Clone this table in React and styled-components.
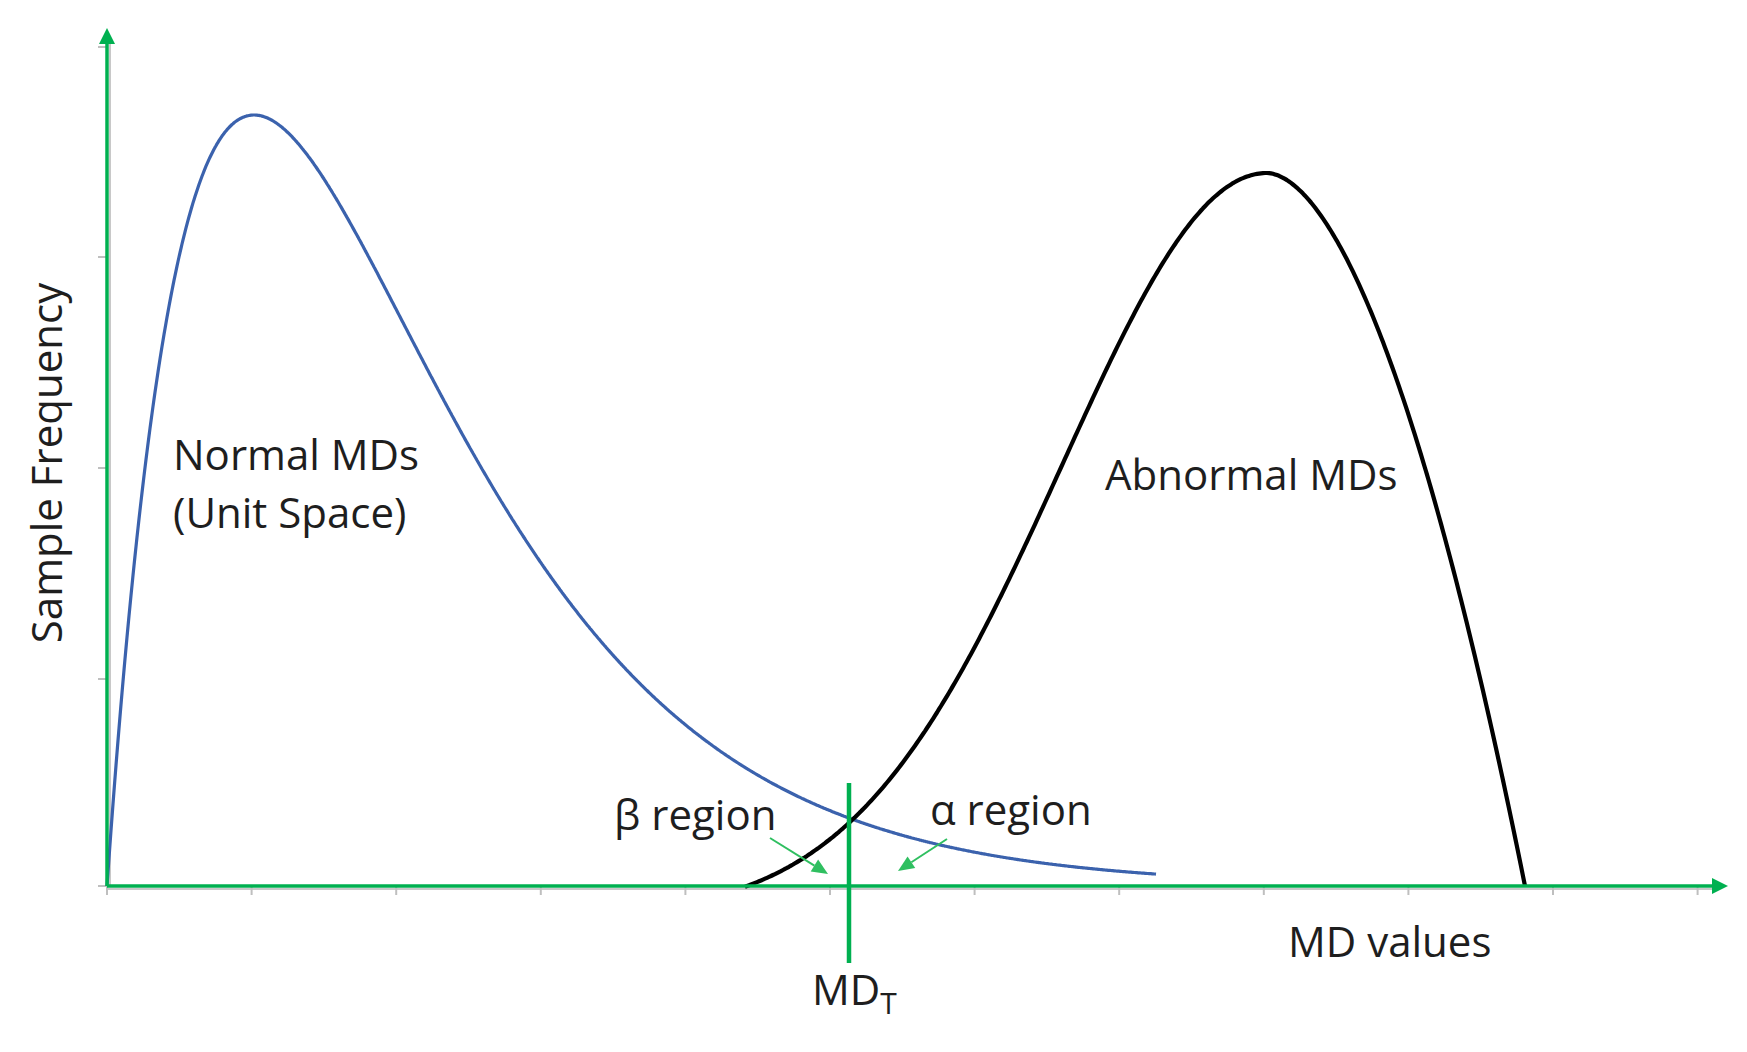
import React from "react";
import styled, { createGlobalStyle } from "styled-components";

const GlobalStyle = createGlobalStyle`
  html, body {
    margin: 0;
    padding: 0;
    background: #ffffff;
  }
  body {
    font-family: "Open Sans", "Liberation Sans", sans-serif;
  }
`;

const Figure = styled.div`
  width: 1747px;
  height: 1052px;
  background: #ffffff;
  overflow: hidden;
`;

const Chart = styled.svg`
  display: block;
  width: 1747px;
  height: 1052px;
`;

const AxisLine = styled.line`
  stroke: #00b050;
  stroke-width: 3.5;
`;

const AxisShadow = styled.line`
  stroke: #c8c8c8;
  stroke-width: 2;
`;

const Tick = styled.line`
  stroke: #bfbfbf;
  stroke-width: 2;
`;

const Head = styled.polygon`
  fill: ${(p) => p.$color || "#00b050"};
`;

const Threshold = styled.line`
  stroke: #00b050;
  stroke-width: 4.5;
`;

const Pointer = styled.line`
  stroke: #2fbf60;
  stroke-width: 2;
`;

const Curve = styled.path`
  fill: none;
  stroke: ${(p) => p.$color};
  stroke-width: ${(p) => p.$width};
  stroke-linejoin: round;
`;

const Label = styled.text`
  font-family: "Open Sans", "Liberation Sans", sans-serif;
  font-size: ${(p) => p.$size || 42}px;
  fill: #1e1e1e;
`;

const ORIGIN_X = 107;
const AXIS_Y = 886;
const X_STEP = 144.6;
const xTicks = Array.from({ length: 12 }, (_, i) => ORIGIN_X + i * X_STEP);
const yTicks = [47, 257, 468, 679, 886];

// sample a height function into an svg path (height measured up from the x axis)
const plot = (fn, from, to, step = 2) => {
  const pts = [];
  for (let x = from; x <= to; x += step) pts.push([x, AXIS_Y - fn(x)]);
  if (pts[pts.length - 1][0] !== to) pts.push([to, AXIS_Y - fn(to)]);
  return pts
    .map(([x, y], i) => `${i ? "L" : "M"}${x.toFixed(1)},${y.toFixed(1)}`)
    .join(" ");
};

// normal MDs: gamma-like, peak 771 high at x = 254
const normal = (x) => {
  const u = (x - ORIGIN_X) / 147;
  return 771 * u * Math.exp(1 - u);
};

// abnormal MDs: long gaussian left flank, steep right flank
const PEAK_X = 1267;
const PEAK_H = 713;
const abnormal = (x) => {
  if (x <= PEAK_X) {
    const s = 205;
    const d = PEAK_X - x;
    const c = Math.exp(-(520 * 520) / (2 * s * s));
    return (PEAK_H * (Math.exp(-(d * d) / (2 * s * s)) - c)) / (1 - c);
  }
  const d = (x - PEAK_X) / 258;
  return PEAK_H * (1 - Math.pow(d, 1.8));
};

// small pointer arrow: line plus filled head at the tip
function PointerArrow({ from, to }) {
  const [x1, y1] = from;
  const [x2, y2] = to;
  const ang = Math.atan2(y2 - y1, x2 - x1);
  const len = 16;
  const half = 7;
  const bx = x2 - len * Math.cos(ang);
  const by = y2 - len * Math.sin(ang);
  const nx = -Math.sin(ang) * half;
  const ny = Math.cos(ang) * half;
  return (
    <g>
      <Pointer x1={x1} y1={y1} x2={bx} y2={by} />
      <Head
        $color="#2fbf60"
        points={`${x2},${y2} ${bx + nx},${by + ny} ${bx - nx},${by - ny}`}
      />
    </g>
  );
}

export default function App() {
  return (
    <>
      <GlobalStyle />
      <Figure>
        <Chart viewBox="0 0 1747 1052">
          {/* faint grey axis lines under the green ones */}
          <AxisShadow x1={ORIGIN_X + 3} y1={44} x2={ORIGIN_X + 3} y2={AXIS_Y} />
          <AxisShadow x1={ORIGIN_X} y1={AXIS_Y + 3} x2={1712} y2={AXIS_Y + 3} />

          {xTicks.map((x, i) => (
            <Tick key={`x${i}`} x1={x} y1={AXIS_Y} x2={x} y2={AXIS_Y + 9} />
          ))}
          {yTicks.map((y, i) => (
            <Tick key={`y${i}`} x1={ORIGIN_X - 9} y1={y} x2={ORIGIN_X} y2={y} />
          ))}

          <Curve d={plot(normal, ORIGIN_X, 1156, 1)} $color="#3b62ad" $width={3.2} />
          <Curve d={plot(abnormal, 745, 1525, 2)} $color="#000000" $width={4.2} />

          <AxisLine x1={ORIGIN_X} y1={AXIS_Y} x2={ORIGIN_X} y2={42} />
          <Head points={`${ORIGIN_X},28 ${ORIGIN_X - 8},44 ${ORIGIN_X + 8},44`} />
          <AxisLine x1={ORIGIN_X} y1={AXIS_Y} x2={1713} y2={AXIS_Y} />
          <Head points={`1728,${AXIS_Y} 1712,${AXIS_Y - 8} 1712,${AXIS_Y + 8}`} />

          <Threshold x1={849} y1={783} x2={849} y2={963} />

          <PointerArrow from={[770, 838]} to={[828, 874]} />
          <PointerArrow from={[947, 839]} to={[898, 871]} />

          <Label x={0} y={0} textAnchor="middle" transform="translate(62,463) rotate(-90)">
            Sample Frequency
          </Label>
          <Label x={173} y={470}>Normal MDs</Label>
          <Label x={173} y={528}>(Unit Space)</Label>
          <Label x={1105} y={490}>Abnormal MDs</Label>
          <Label x={614} y={830}>β region</Label>
          <Label x={930} y={825}>α region</Label>
          <Label x={1288} y={957}>MD values</Label>
          <Label x={812} y={1005}>
            MD
            <tspan fontSize={30} dy={9}>T</tspan>
          </Label>
        </Chart>
      </Figure>
    </>
  );
}
